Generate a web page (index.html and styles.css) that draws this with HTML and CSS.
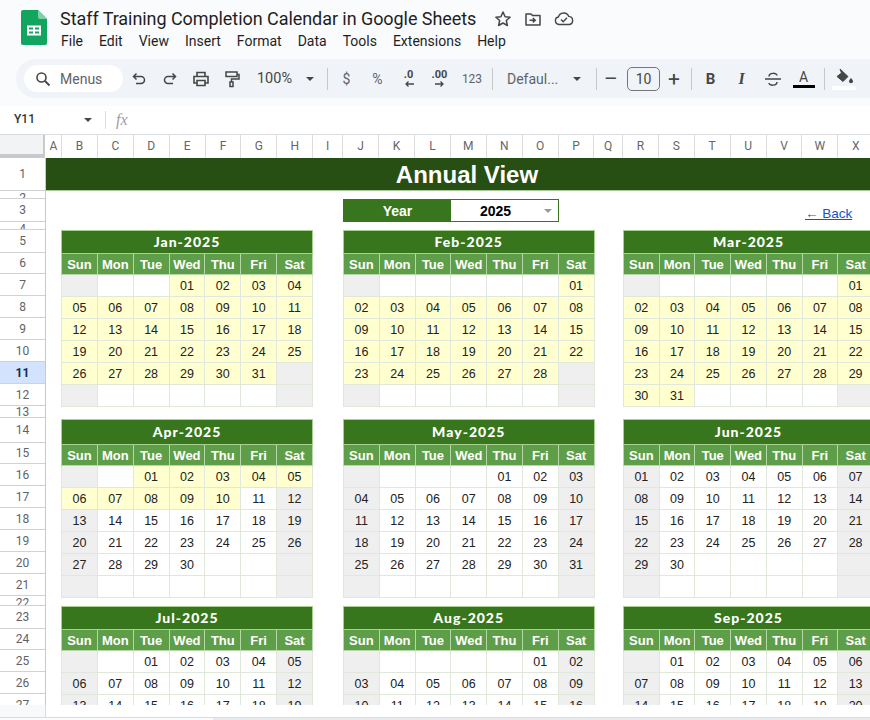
FILE: index.html
```html
<!DOCTYPE html>
<html lang="en">
<head>
<meta charset="utf-8">
<title>Staff Training Completion Calendar in Google Sheets</title>
<link rel="stylesheet" href="styles.css">
</head>
<body>
<div class="app">
<header class="head">
  <div class="titlebar">
    <svg class="logo" viewBox="0 0 26 35"><path d="M2 0h15l9 9v24a2 2 0 0 1-2 2H2a2 2 0 0 1-2-2V2a2 2 0 0 1 2-2z" fill="#11a55f"/><path d="M17 0l9 9h-7a2 2 0 0 1-2-2z" fill="#7fd0a6"/><path d="M6 15.500h14v10H6z M8 17.500v2h4v-2z M14 17.500v2h4v-2z M8 21.500v2h4v-2z M14 21.500v2h4v-2z" fill="#fff" fill-rule="evenodd"/></svg>
    <div class="titletext">
      <div class="titleline">
        <span class="doc">Staff Training Completion Calendar in Google Sheets</span>
        <svg class="ic star" viewBox="0 0 18 18"><path d="M9 2l2.100 4.700 5 .5-3.800 3.300 1.100 5L9 13l-4.400 2.500 1.100-5L1.900 7.200l5-.5z" fill="none" stroke="#444746" stroke-width="1.500" stroke-linejoin="round"/></svg>
        <svg class="ic folder" viewBox="0 0 18 18"><path d="M2 4h5l1.500 1.500H16v9.500H2z" fill="none" stroke="#444746" stroke-width="1.500" stroke-linejoin="round"/><path d="M5.500 10.200h5M8.800 8l2.400 2.200-2.400 2.200" fill="none" stroke="#444746" stroke-width="1.500"/></svg>
        <svg class="ic cloud" viewBox="0 0 20 18"><path d="M5 14.500a3.800 3.800 0 0 1-.6-7.500 5.500 5.500 0 0 1 10.400-.6 4.100 4.100 0 0 1 .6 8.100z" fill="none" stroke="#444746" stroke-width="1.400" stroke-linejoin="round"/><path d="M7 9.500l2.200 2.200 3.800-4" fill="none" stroke="#444746" stroke-width="1.400"/></svg>
      </div>
      <nav class="menu"><span>File</span><span>Edit</span><span>View</span><span>Insert</span><span>Format</span><span>Data</span><span>Tools</span><span>Extensions</span><span>Help</span></nav>
    </div>
  </div>
  <div class="toolbar">
    <div class="search">
      <svg class="ic16" viewBox="0 0 16 16"><circle cx="6.500" cy="6.500" r="4.500" fill="none" stroke="#444746" stroke-width="1.600"/><path d="M10 10l4.500 4.500" stroke="#444746" stroke-width="1.800"/></svg>
      <span>Menus</span>
    </div>
    <div class="slot"><svg class="ic16" viewBox="0 0 16 16"><path d="M5.500 2.500L2.500 5.500l3 3M2.500 5.500H10a3.500 3.500 0 0 1 0 7H5" fill="none" stroke="#444746" stroke-width="1.500"/></svg></div>
    <div class="slot"><svg class="ic16" viewBox="0 0 16 16"><path d="M10.500 2.500l3 3-3 3M13.500 5.500H6a3.500 3.500 0 0 0 0 7h5" fill="none" stroke="#444746" stroke-width="1.500"/></svg></div>
    <div class="slot"><svg class="ic18" viewBox="0 0 18 18"><path d="M5 6V2.500h8V6M5 13H2V6.500h14V13h-3M5 10.500h8v5H5z" fill="none" stroke="#444746" stroke-width="1.600"/></svg></div>
    <div class="slot"><svg class="ic18" viewBox="0 0 18 18"><path d="M3 2h11v4.500H3zM14 4.500h2V9H8.500v3M7 12h3v4.500H7z" fill="none" stroke="#444746" stroke-width="1.500"/></svg></div>
    <div class="slot zoomval">100%</div>
    <div class="slot arrow"><i class="tri"></i></div>
    <i class="sep s1"></i>
    <div class="slot fmt">$</div>
    <div class="slot fmt">%</div>
    <div class="slot dec"><span>.0</span><svg viewBox="0 0 10 6"><path d="M10 3H2M4.500 .5L2 3l2.500 2.500" fill="none" stroke="#444746" stroke-width="1.300"/></svg></div>
    <div class="slot dec"><span>.00</span><svg viewBox="0 0 10 6"><path d="M0 3h8M5.500 .5L8 3 5.500 5.500" fill="none" stroke="#444746" stroke-width="1.300"/></svg></div>
    <div class="slot num">123</div>
    <i class="sep s2"></i>
    <div class="slot font">Defaul...</div>
    <div class="slot arrow2"><i class="tri"></i></div>
    <i class="sep s3"></i>
    <div class="slot pm">&#8211;</div>
    <div class="size">10</div>
    <div class="slot pm">+</div>
    <i class="sep s4"></i>
    <div class="slot bold">B</div>
    <div class="slot ital">I</div>
    <div class="slot"><svg class="ic18" viewBox="0 0 18 18"><path d="M1 9h16M5 6.500c0-4 8-4 8-1M13 12c0 4-8 4-8 1" fill="none" stroke="#444746" stroke-width="1.500"/></svg></div>
    <div class="slot color"><span>A</span><i></i></div>
    <i class="sep s5"></i>
    <div class="slot fill"><svg viewBox="0 0 20 17"><path d="M6 1l8 7.500-5 5L3 8.500 7.500 5z" fill="#444746" stroke="#444746"/><path d="M17 10s-2 2-2 3.300a2 2 0 0 0 4 0C19 12 17 10 17 10z" fill="#444746"/></svg><i></i></div>
  </div>
</header>
<div class="formula">
  <span class="namebox">Y11</span><i class="tri"></i><i class="fsep"></i><span class="fx">fx</span>
</div>
<div class="sheet">
  <div class="corner"></div>
  <div class="cols">
    <span class="ca">A</span><span>B</span><span>C</span><span>D</span><span>E</span><span>F</span><span>G</span><span>H</span><span class="ci">I</span><span>J</span><span>K</span><span>L</span><span>M</span><span>N</span><span>O</span><span>P</span><span class="cq">Q</span><span>R</span><span>S</span><span>T</span><span>U</span><span>V</span><span>W</span><span>X</span>
  </div>
  <div class="rows">
    <span class="r33">1</span><span class="r8">2</span><span class="r23">3</span><span class="r8">4</span><span class="r23">5</span><span class="r21">6</span><span>7</span><span>8</span><span>9</span><span>10</span><span class="sel">11</span><span>12</span><span class="r12">13</span><span class="r25">14</span><span class="r21">15</span><span>16</span><span>17</span><span>18</span><span>19</span><span>20</span><span>21</span><span class="r10">22</span><span class="r23">23</span><span class="r21">24</span><span>25</span><span>26</span><span>27</span>
  </div>
  <div class="grid">
    <div class="banner">Annual View</div>
    <div class="yearrow">
      <div class="year"><span class="ylabel">Year</span><span class="yvalue">2025<i class="ytri"></i></span></div>
      <a class="back" href="#">&#8592; Back</a>
    </div>
    <div class="months first">
      <table><tr><th colspan="7" class="mt">Jan-2025</th></tr><tr class="dn"><th>Sun<th>Mon<th>Tue<th>Wed<th>Thu<th>Fri<th>Sat</tr>
      <tr><td class=g><td><td><td class=y>01<td class=y>02<td class=y>03<td class=y>04
      <tr><td class=y>05<td class=y>06<td class=y>07<td class=y>08<td class=y>09<td class=y>10<td class=y>11
      <tr><td class=y>12<td class=y>13<td class=y>14<td class=y>15<td class=y>16<td class=y>17<td class=y>18
      <tr><td class=y>19<td class=y>20<td class=y>21<td class=y>22<td class=y>23<td class=y>24<td class=y>25
      <tr><td class=y>26<td class=y>27<td class=y>28<td class=y>29<td class=y>30<td class=y>31<td class=g>
      <tr><td class=g><td><td><td><td><td><td class=g></table>
      <table><tr><th colspan="7" class="mt">Feb-2025</th></tr><tr class="dn"><th>Sun<th>Mon<th>Tue<th>Wed<th>Thu<th>Fri<th>Sat</tr>
      <tr><td class=g><td><td><td><td><td><td class=y>01
      <tr><td class=y>02<td class=y>03<td class=y>04<td class=y>05<td class=y>06<td class=y>07<td class=y>08
      <tr><td class=y>09<td class=y>10<td class=y>11<td class=y>12<td class=y>13<td class=y>14<td class=y>15
      <tr><td class=y>16<td class=y>17<td class=y>18<td class=y>19<td class=y>20<td class=y>21<td class=y>22
      <tr><td class=y>23<td class=y>24<td class=y>25<td class=y>26<td class=y>27<td class=y>28<td class=g>
      <tr><td class=g><td><td><td><td><td><td class=g></table>
      <table><tr><th colspan="7" class="mt">Mar-2025</th></tr><tr class="dn"><th>Sun<th>Mon<th>Tue<th>Wed<th>Thu<th>Fri<th>Sat</tr>
      <tr><td class=g><td><td><td><td><td><td class=y>01
      <tr><td class=y>02<td class=y>03<td class=y>04<td class=y>05<td class=y>06<td class=y>07<td class=y>08
      <tr><td class=y>09<td class=y>10<td class=y>11<td class=y>12<td class=y>13<td class=y>14<td class=y>15
      <tr><td class=y>16<td class=y>17<td class=y>18<td class=y>19<td class=y>20<td class=y>21<td class=y>22
      <tr><td class=y>23<td class=y>24<td class=y>25<td class=y>26<td class=y>27<td class=y>28<td class=y>29
      <tr><td class=y>30<td class=y>31<td><td><td><td><td class=g></table>
    </div>
    <div class="months second">
      <table><tr><th colspan="7" class="mt">Apr-2025</th></tr><tr class="dn"><th>Sun<th>Mon<th>Tue<th>Wed<th>Thu<th>Fri<th>Sat</tr>
      <tr><td class=g><td><td class=y>01<td class=y>02<td class=y>03<td class=y>04<td class=y>05
      <tr><td class=y>06<td class=y>07<td class=y>08<td class=y>09<td class=y>10<td>11<td class=g>12
      <tr><td class=g>13<td>14<td>15<td>16<td>17<td>18<td class=g>19
      <tr><td class=g>20<td>21<td>22<td>23<td>24<td>25<td class=g>26
      <tr><td class=g>27<td>28<td>29<td>30<td><td><td class=g>
      <tr><td class=g><td><td><td><td><td><td class=g></table>
      <table><tr><th colspan="7" class="mt">May-2025</th></tr><tr class="dn"><th>Sun<th>Mon<th>Tue<th>Wed<th>Thu<th>Fri<th>Sat</tr>
      <tr><td class=g><td><td><td><td>01<td>02<td class=g>03
      <tr><td class=g>04<td>05<td>06<td>07<td>08<td>09<td class=g>10
      <tr><td class=g>11<td>12<td>13<td>14<td>15<td>16<td class=g>17
      <tr><td class=g>18<td>19<td>20<td>21<td>22<td>23<td class=g>24
      <tr><td class=g>25<td>26<td>27<td>28<td>29<td>30<td class=g>31
      <tr><td class=g><td><td><td><td><td><td class=g></table>
      <table><tr><th colspan="7" class="mt">Jun-2025</th></tr><tr class="dn"><th>Sun<th>Mon<th>Tue<th>Wed<th>Thu<th>Fri<th>Sat</tr>
      <tr><td class=g>01<td>02<td>03<td>04<td>05<td>06<td class=g>07
      <tr><td class=g>08<td>09<td>10<td>11<td>12<td>13<td class=g>14
      <tr><td class=g>15<td>16<td>17<td>18<td>19<td>20<td class=g>21
      <tr><td class=g>22<td>23<td>24<td>25<td>26<td>27<td class=g>28
      <tr><td class=g>29<td>30<td><td><td><td><td class=g>
      <tr><td class=g><td><td><td><td><td><td class=g></table>
    </div>
    <div class="months third">
      <table><tr><th colspan="7" class="mt">Jul-2025</th></tr><tr class="dn"><th>Sun<th>Mon<th>Tue<th>Wed<th>Thu<th>Fri<th>Sat</tr>
      <tr><td class=g><td><td>01<td>02<td>03<td>04<td class=g>05
      <tr><td class=g>06<td>07<td>08<td>09<td>10<td>11<td class=g>12
      <tr><td class=g>13<td>14<td>15<td>16<td>17<td>18<td class=g>19</table>
      <table><tr><th colspan="7" class="mt">Aug-2025</th></tr><tr class="dn"><th>Sun<th>Mon<th>Tue<th>Wed<th>Thu<th>Fri<th>Sat</tr>
      <tr><td class=g><td><td><td><td><td>01<td class=g>02
      <tr><td class=g>03<td>04<td>05<td>06<td>07<td>08<td class=g>09
      <tr><td class=g>10<td>11<td>12<td>13<td>14<td>15<td class=g>16</table>
      <table><tr><th colspan="7" class="mt">Sep-2025</th></tr><tr class="dn"><th>Sun<th>Mon<th>Tue<th>Wed<th>Thu<th>Fri<th>Sat</tr>
      <tr><td class=g><td>01<td>02<td>03<td>04<td>05<td class=g>06
      <tr><td class=g>07<td>08<td>09<td>10<td>11<td>12<td class=g>13
      <tr><td class=g>14<td>15<td>16<td>17<td>18<td>19<td class=g>20</table>
    </div>
  </div>
</div>
<div class="foot"><div class="footcorner"></div></div>
<div class="tabs"><div class="tabfill"></div></div>
</div>
</body>
</html>
```
FILE: styles.css
```css
* { box-sizing: border-box; }
html, body { margin: 0; height: 100%; overflow: hidden; background: #fff; }
body { font-family: "Liberation Sans", Arial, sans-serif; }
i { font-style: normal; display: block; }

.app { width: 870px; height: 720px; display: flex; flex-direction: column; overflow: hidden; }

/* top chrome */
.head { height: 106px; background: #f9fbfd; flex: none; }
.titlebar { height: 59px; display: flex; padding: 10px 0 0 21px; }
.logo { width: 26px; height: 35px; flex: none; }
.titletext { margin-left: 13px; margin-top: -2px; }
.titleline { display: flex; align-items: center; height: 22px; }
.doc { font: 400 18px/22px Roboto, sans-serif; color: #1f1f1f; width: 416px; white-space: nowrap; letter-spacing: -.06px; }
.ic { height: 18px; flex: none; }
.star { width: 18px; margin-left: 18px; }
.folder { width: 18px; margin-left: 12px; }
.cloud { width: 20px; margin-left: 12px; }
.menu { display: flex; margin-top: 2px; font: 400 14px/18px Roboto, sans-serif; color: #1f1f1f; gap: 16px; padding-left: 1px; }

.toolbar { margin-left: 16px; height: 39px; background: #f0f4f9; border-radius: 20px 0 0 20px; display: flex; align-items: center; padding-left: 8px; color: #444746; font-family: Roboto, sans-serif; }
.search { width: 99px; height: 27px; background: #fff; border-radius: 14px; display: flex; align-items: center; padding-left: 11px; gap: 9px; font-size: 14px; color: #5f6368; flex: none; }
.ic16 { width: 16px; height: 16px; flex: none; }
.ic18 { width: 18px; height: 18px; flex: none; }
.slot { width: 31px; height: 30px; display: flex; align-items: center; justify-content: center; flex: none; font-size: 14px; }
.tri { width: 0; height: 0; border: 4px solid transparent; border-top-color: #444746; border-bottom-width: 0; }
.zoomval { width: 55px; font-size: 14.500px; }
.arrow { width: 15px; }
.sep { width: 1px; height: 22px; background: #c7c7c7; flex: none; }
.s1 { margin: 0 3px 0 10px; }
.s2 { margin: 0 8px 0 3px; }
.s3 { margin: 0 0 0 7px; }
.s4 { margin: 0 0 0 3px; }
.s5 { margin: 0 4px 0 5px; }
.fmt { font-size: 14px; color: #5f6368; }
.dec { flex-direction: column; font-size: 11px; font-weight: 700; line-height: 10px; }
.dec svg { width: 10px; height: 6px; margin-top: 1px; }
.num { width: 34px; font-size: 12px; color: #5f6368; }
.font { width: 64px; justify-content: flex-start; padding-left: 6px; font-size: 14px; color: #5f6368; }
.arrow2 { width: 24px; }
.pm { width: 28px; font-size: 21px; font-weight: 400; color: #444746; }
.size { width: 33px; height: 24px; margin-left: 2px; border: 1px solid #747775; border-radius: 5px; font-size: 14px; line-height: 22px; text-align: center; flex: none; }
.bold { margin-left: 3px; font-weight: 700; font-size: 15px; }
.ital { font-family: "Liberation Serif", serif; font-style: italic; font-weight: 700; font-size: 16px; }
.color { flex-direction: column; font-size: 14px; line-height: 14px; }
.color i { width: 22px; height: 3px; background: #000; margin-top: 1px; }
.fill { flex-direction: column; width: 30px; }
.fill svg { width: 20px; height: 17px; }
.fill i { width: 24px; height: 4px; background: #fff; margin-top: 1px; }

/* formula bar */
.formula { height: 28px; flex: none; background: #fff; display: flex; align-items: center; padding-left: 14px; font-size: 12px; color: #444746; }
.namebox { width: 70px; font: 500 12px Roboto, sans-serif; color: #333; padding-bottom: 2px; }
.fsep { width: 1px; height: 18px; background: #dadce0; margin: 0 10px 0 13px; }
.fx { font: italic 16px "Liberation Serif", serif; color: #9aa0a6; }

/* sheet */
.sheet { height: 571px; flex: none; display: grid; grid-template-columns: 46px 1fr; grid-template-rows: 23px 1fr; overflow: hidden; border-top: 1px solid #dadce0; background: #fff; }
.corner { background: #f1f3f4; border-right: 3px solid #c7c9cc; border-bottom: 4px solid #c7c9cc; }
.cols { display: flex; overflow: hidden; font: 400 12px/23px Roboto, sans-serif; color: #666; background: #fff; margin-left: -1px; padding-left: 1px; }
.cols span { width: 35.900px; flex: none; text-align: center; border-right: 1px solid #dadce0; }
.cols .ca { width: 16px; }
.cols .ci { width: 30px; }
.cols .cq { width: 28.500px; }
.rows { display: flex; flex-direction: column; overflow: hidden; font: 400 12px Roboto, sans-serif; color: #5f6368; border-right: 1px solid #c7c9cc; }
.rows span { height: 22px; flex: none; display: flex; align-items: center; justify-content: center; border-bottom: 1px solid #d0d3d6; overflow: hidden; }
.rows .r33 { height: 33px; }
.rows .r8 { height: 8px; align-items: flex-start; }
.rows .r23 { height: 23px; }
.rows .r21 { height: 21px; }
.rows .r12 { height: 12px; }
.rows .r25 { height: 25px; }
.rows .r10 { height: 10px; align-items: flex-start; }
.rows .sel { background: #d3e3fd; color: #0b2a5b; font-weight: 700; }

.grid { overflow: hidden; position: relative; }
.banner { width: 842px; height: 33px; background: #274e13; color: #fff; font: 700 24px/33px "Liberation Sans", sans-serif; text-align: center; border-bottom: 1px solid #a9c99a; }
.yearrow { height: 23px; margin-top: 8px; padding-left: 297px; display: flex; }
.year { width: 216px; height: 23px; display: flex; border: 1px solid #38761d; flex: none; }
.ylabel { width: 107px; background: #38761d; color: #fff; font: 700 14px/23px "Liberation Sans", sans-serif; text-align: center; }
.yvalue { flex: 1; font: 700 14px/23px "Liberation Sans", sans-serif; color: #000; text-align: center; position: relative; padding-right: 18px; }
.ytri { position: absolute; right: 6px; top: 9px; width: 0; height: 0; border: 4px solid transparent; border-top-color: #999; border-bottom-width: 0; }
.back { margin-left: 246px; align-self: flex-end; font: 400 13.500px/17px "Liberation Sans", sans-serif; color: #1155cc; text-decoration: underline; white-space: nowrap; }

.months { display: grid; grid-template-columns: 252px 251.500px 251px; column-gap: 30px; padding-left: 15px; width: 860px; }
.months table:last-child { margin-left: -1.500px; }
.first { margin-top: 8px; }
.second { margin-top: 12px; }
.third { margin-top: 8px; }
.months table { border-collapse: collapse; table-layout: fixed; width: 100%; }
.mt { height: 23px; background: #38761d; color: #fff; font: 900 14px/20px Lato, sans-serif; letter-spacing: 1px; text-align: center; border: 1px solid #a9d08e; padding: 0; }
.second .mt { height: 25px; }
.dn th { height: 21px; background: #5f9e48; color: #fff; font: 700 13px/18px "Liberation Sans", sans-serif; border: 1px solid #b6d7a8; padding: 1px 0 0; text-align: center; }
.months td { height: 22px; padding: 0; text-align: center; font: 400 12.500px/20px "Liberation Sans", sans-serif; color: #222; border: 1px solid #dfe8da; background: #fff; }
.months td.y { background: #ffffcf; }
.months td.g { background: #efefef; }

/* bottom */
.foot { height: 12px; flex: none; background: #fff; }
.footcorner { width: 46px; height: 12px; background: #f8f9fa; border-right: 1px solid #dadce0; }
.tabs { flex: 1; background: #f9fbfd; border-top: 1px solid #dadce0; }
.tabfill { margin-left: 213px; height: 2px; background: #e8eaed; }
```
